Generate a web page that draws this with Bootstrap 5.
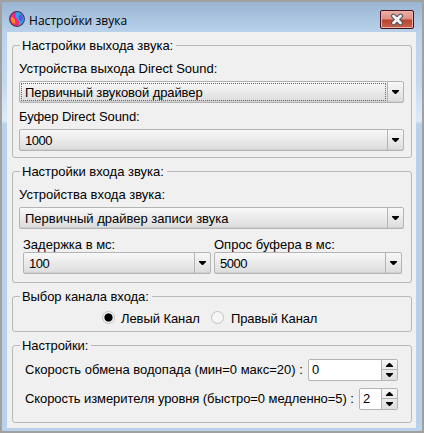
<!DOCTYPE html>
<html lang="ru">
<head>
<meta charset="utf-8">
<meta name="viewport" content="width=device-width, initial-scale=1">
<title>Настройки звука</title>
<link href="https://cdn.jsdelivr.net/npm/bootstrap@5.3.0/dist/css/bootstrap.min.css" rel="stylesheet">
<style>
body{font:13px/16px "Liberation Sans",Arial,sans-serif;color:#000;background:#a0a0a0;overflow:hidden}
.win{width:424px;height:433px;border:2px solid #a0a0a0;background:linear-gradient(#9ab5d2 0,#b9d1ea 30px,#bfd5ee 45px,#c3d8ef 80px,#dce9f8 115px,#dce9f8 119px,#b9d1ea 122px);padding:0 5px 3px}
.titlebar{height:30px}
.appicon{margin:5px 0 0 2px}
.caption{font:12px/16px "Open Sans","Noto Sans",sans-serif;letter-spacing:.04px;margin-left:3px}
.closer{width:34px;height:19px;border:1px solid #45101f;border-radius:2px;background:linear-gradient(#eab0a5 0,#dc8e80 48%,#b9432c 52%,#c9654c 100%);box-shadow:inset 0 0 0 1px #e9b1a5;margin:5px 3px 0 0}
.panel{background:#f0f0f0;height:396px;width:409px;padding:13px 5px 0}
.group{border:1px solid #b8b8b8;border-radius:3px;width:400px;margin-bottom:13px;padding:0 6px}
.heading{line-height:16px;margin:-8px 0 7px 1px;padding:0 3px 0 2px;width:fit-content;background:#f0f0f0;white-space:nowrap}
.line{white-space:nowrap;height:16px}
.combo{height:22px;border:1px solid #b4b4b4;border-radius:2px;background:linear-gradient(#f8f8f8,#dcdcdc);box-shadow:inset 0 -1px #d0d0d0}
.combo .val{padding-left:4px;line-height:20px;height:18px;margin:1px;white-space:nowrap}
.combo .drop{width:16px;border-left:1px solid #b4b4b4}
.focus{outline:1px dotted #666;outline-offset:-1px}
.num{letter-spacing:-.5px}
.t1{letter-spacing:-.08px}
.t2{letter-spacing:-.12px}
.dot{width:13px;height:13px;border-radius:50%;border:1px solid #c2c2c2;background:#f6f6f6}
.dot.on{background:radial-gradient(circle,#000 0 3.6px,#f6f6f6 4.6px)}
.spin{height:22px;border:1px solid #b4b4b4;border-radius:2px;background:#fff}
.spin .val{padding-left:3px;line-height:20px}
.spin .btns{width:16px;border-left:1px solid #b4b4b4;background:linear-gradient(#f6f6f6,#dedede)}
.spin .btns div{height:10px}
.spin .btns div:first-child{border-bottom:1px solid #b4b4b4}
svg{display:block}
#g1{height:113px}
#g2{height:112px}
#g3{height:36px}
#g4{height:78px;margin:0}
.c-full{width:385px;margin-top:4px}
.second{margin-top:6px}
.pair{gap:3px;margin:8px 0 0 4px}
.pair>div{width:188px}
.pair .line{height:15px}
#g3 .heading{margin-bottom:6px}
#g4 .heading{margin-bottom:5px}
.radios{padding-left:83px}
.r1{margin:0 11px 0 6px;width:79px}
.r2{margin-left:7px}
.srow{height:22px;margin-bottom:7px;padding:0 7px 0 6px}
.s1{width:90px}
.s2{width:39px}
</style>
<script src="https://cdn.jsdelivr.net/npm/bootstrap@5.3.0/dist/js/bootstrap.bundle.min.js"></script>
</head>
<body>
<div class="win">
<div class="titlebar d-flex align-items-center">
<svg class="appicon" width="17" height="17" viewBox="0 0 17 17"><circle cx="8" cy="8" r="7.9" fill="#29305c"/><circle cx="8" cy="8" r="6.900" fill="#f0325d"/><path d="M7.500 1.100A6.900 6.900 0 0 1 9.500 14.700C11 12 10 10 8.500 8.500S5.500 4 7.500 1.100Z" fill="#20a8f4"/><path d="M10.500 3.500C13.500 3.500 14.800 7 12.500 10.500 10.500 10 9.500 8 9.500 6Z" fill="#704bd0"/><path d="M2 6C5 6 7 9.500 6 12.500 4 13 1.500 10 2 6Z" fill="#ff8b20"/><path d="M6 1.800C4.500 5 6 7.500 7.700 9.200 9 11 9 13 8 14.500" fill="none" stroke="#f51fa4" stroke-width="1.300"/></svg>
<div class="caption flex-grow-1 pt-2">Настройки звука</div>
<div class="closer d-flex align-items-center justify-content-center"><svg width="14" height="13" viewBox="0 0 14 13"><path d="M3.500 3 10.500 10M10.500 3 3.500 10" stroke="#4b5263" stroke-width="4.800" stroke-linecap="round"/><path d="M3.500 3 10.500 10M10.500 3 3.500 10" stroke="#f4f4f4" stroke-width="2.800" stroke-linecap="round"/></svg></div>
</div>
<main class="panel">
<section class="group" id="g1"><div class="heading">Настройки выхода звука:</div>
<div class="line">Устройства выхода Direct Sound:</div>
<div class="combo d-flex c-full"><div class="val flex-grow-1 focus t1">Первичный звуковой драйвер</div><div class="drop d-flex align-items-center justify-content-center"><svg width="7" height="4"><path d="M0 0H7V1L4 4H3L0 1Z"/></svg></div></div>
<div class="line second t1">Буфер Direct Sound:</div>
<div class="combo d-flex c-full"><div class="val flex-grow-1 num">1000</div><div class="drop d-flex align-items-center justify-content-center"><svg width="7" height="4"><path d="M0 0H7V1L4 4H3L0 1Z"/></svg></div></div>
</section>
<section class="group" id="g2"><div class="heading">Настройки входа звука:</div>
<div class="line">Устройства входа звука:</div>
<div class="combo d-flex c-full"><div class="val flex-grow-1">Первичный драйвер записи звука</div><div class="drop d-flex align-items-center justify-content-center"><svg width="7" height="4"><path d="M0 0H7V1L4 4H3L0 1Z"/></svg></div></div>
<div class="d-flex pair">
<div><div class="line">Задержка в мс:</div><div class="combo d-flex"><div class="val flex-grow-1 num">100</div><div class="drop d-flex align-items-center justify-content-center"><svg width="7" height="4"><path d="M0 0H7V1L4 4H3L0 1Z"/></svg></div></div></div>
<div><div class="line">Опрос буфера в мс:</div><div class="combo d-flex"><div class="val flex-grow-1 num">5000</div><div class="drop d-flex align-items-center justify-content-center"><svg width="7" height="4"><path d="M0 0H7V1L4 4H3L0 1Z"/></svg></div></div></div>
</div>
</section>
<section class="group" id="g3"><div class="heading t1">Выбор канала входа:</div>
<div class="d-flex radios"><div class="dot on"></div><div class="line r1 t1">Левый Канал</div><div class="dot"></div><div class="line r2 t2">Правый Канал</div></div>
</section>
<section class="group" id="g4"><div class="heading t2">Настройки:</div>
<div class="d-flex justify-content-between align-items-center srow"><div class="line">Скорость обмена водопада (мин=0 макс=20) :</div><div class="spin d-flex s1"><div class="val flex-grow-1">0</div><div class="btns"><div class="d-flex align-items-center justify-content-center"><svg width="7" height="4"><path d="M0 4H7V3L4 0H3L0 3Z"/></svg></div><div class="d-flex align-items-center justify-content-center"><svg width="7" height="4"><path d="M0 0H7V1L4 4H3L0 1Z"/></svg></div></div></div></div>
<div class="d-flex justify-content-between align-items-center srow"><div class="line t1">Скорость измерителя уровня (быстро=0 медленно=5) :</div><div class="spin d-flex s2"><div class="val flex-grow-1">2</div><div class="btns"><div class="d-flex align-items-center justify-content-center"><svg width="7" height="4"><path d="M0 4H7V3L4 0H3L0 3Z"/></svg></div><div class="d-flex align-items-center justify-content-center"><svg width="7" height="4"><path d="M0 0H7V1L4 4H3L0 1Z"/></svg></div></div></div></div>
</section>
</main>
</div>
</body>
</html>
